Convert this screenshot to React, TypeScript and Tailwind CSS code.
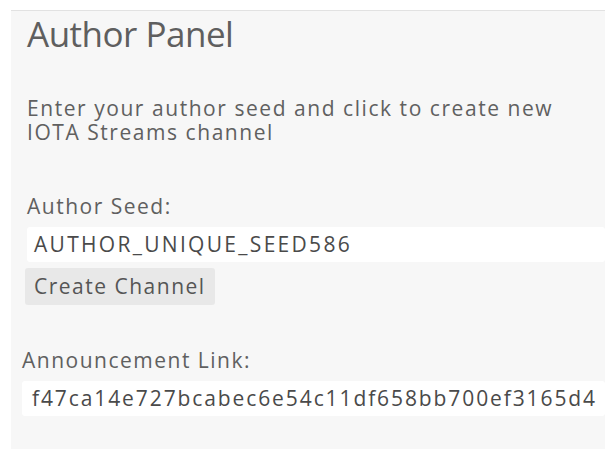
import React from "react";

const font = { fontFamily: '"Open Sans", "Noto Sans", sans-serif' };

export default function App() {
  return (
    <div className="w-[605px] h-[449px] bg-white pt-[10px] pl-[11px] overflow-hidden" style={font}>
      <div className="h-full bg-[#f7f7f7] border-t border-[#e2e2e2] pl-[16px] text-[#606060]">
        <h1 className="text-[35px] leading-[44px] mt-[1px] tracking-[-0.5px] text-[#5f5f5f]">Author Panel</h1>
        <p className="text-[21px] leading-[24px] tracking-[1.55px] mt-[40px] w-[560px]">
          Enter your author seed and click to create new IOTA Streams channel
        </p>
        <div className="mt-[50px] text-[21px] leading-[24px] tracking-[1.5px]">Author Seed:</div>
        <div className="mt-[9px] h-[35px] bg-white rounded-[3px] flex items-center pl-[7px] text-[21px] tracking-[2.3px] text-[#4a4a4a]">
          AUTHOR_UNIQUE_SEED586
        </div>
        <button className="mt-[6px] -ml-[2px] h-[37px] px-[9px] bg-[#e8e8e8] rounded-[3px] text-[21px] tracking-[1.5px] text-[#555] block">
          Create Channel
        </button>
        <div className="mt-[43px] -ml-[5px] text-[21px] leading-[24px] tracking-[1.5px]">Announcement Link:</div>
        <div className="mt-[9px] -ml-[5px] h-[35px] bg-white rounded-[3px] flex items-center pl-[10px] text-[21px] tracking-[1.9px] text-[#4a4a4a] whitespace-nowrap">
          f47ca14e727bcabec6e54c11df658bb700ef3165d4
        </div>
      </div>
    </div>
  );
}
